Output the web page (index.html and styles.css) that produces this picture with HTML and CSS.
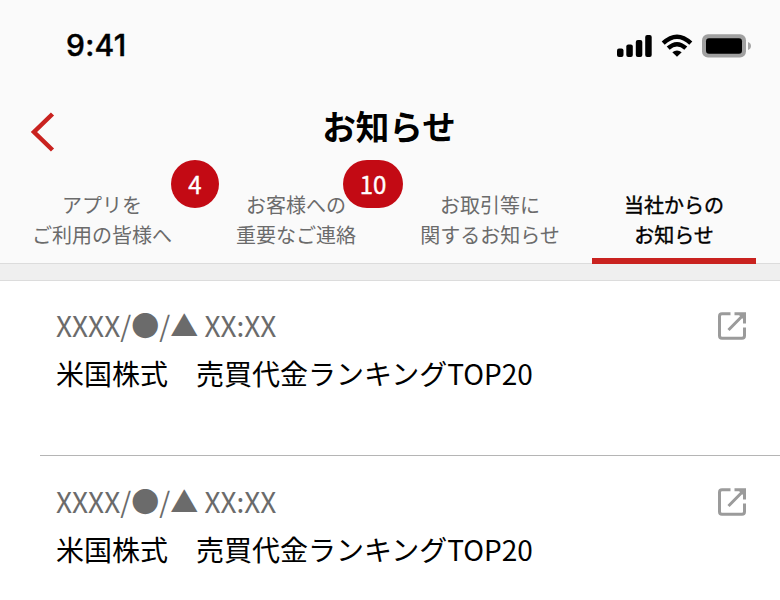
FILE: index.html
```html
<!DOCTYPE html>
<html lang="ja">
<head>
<meta charset="utf-8">
<title>お知らせ</title>
<link rel="stylesheet" href="styles.css">
</head>
<body>
<header class="top">
  <div class="status">
    <span class="clock">9:41</span>
    <div class="indicators">
      <svg class="signal" width="35" height="22" viewBox="0 0 35 22"><rect x="0" y="13.5" width="6.5" height="8.5" rx="2"/><rect x="9.3" y="9.5" width="6.5" height="12.5" rx="2"/><rect x="18.8" y="5" width="6.5" height="17" rx="2"/><rect x="28.2" y="0" width="6.5" height="22" rx="2"/></svg>
      <svg class="wifi" width="32" height="24" viewBox="0 0 32 24"><path d="M2.2 9.2Q16-3.7 29.8 9.2M7.2 14.2Q16 6.2 24.8 14.2" fill="none" stroke="#000" stroke-width="4.4"/><path d="M11.3 18.2Q16 14.6 20.7 18.2L16 22.8Z"/></svg>
      <svg class="battery" width="49" height="24" viewBox="0 0 49 24"><rect x="0" y="0.3" width="44" height="23.2" rx="6" fill="#a0a0a0"/><rect x="4" y="4.2" width="36" height="15.6" rx="3"/><path d="M46 8q3 1.2 3 4t-3 4z" fill="#a6a6a6"/></svg>
    </div>
  </div>
  <div class="titlebar">
    <svg class="back" width="26" height="40" viewBox="0 0 26 40"><path d="M22.5 2L4 20L22.5 38" fill="none" stroke="#c9221f" stroke-width="4.5"/></svg>
    <h1>お知らせ</h1>
  </div>
  <nav class="tabs">
    <a class="tab">アプリを<br>ご利用の皆様へ<span class="badge">4</span></a>
    <a class="tab">お客様への<br>重要なご連絡<span class="badge wide">10</span></a>
    <a class="tab">お取引等に<br>関するお知らせ</a>
    <a class="tab active">当社からの<br>お知らせ</a>
  </nav>
</header>
<div class="gap"></div>
<main>
  <article class="item">
    <div class="date">XXXX/●/▲ XX:XX</div>
    <div class="subject">米国株式　売買代金ランキングTOP20</div>
    <svg class="ext" width="28" height="28" viewBox="0 0 28 28"><path d="M12.5 1.7H4Q1.5 1.7 1.5 4.2V23.8Q1.5 26.3 4 26.3H24Q26.5 26.3 26.5 23.8V15.5M16.5 1.7H26.5V11.5M26.5 1.7L10.5 18"/><path class="tip" d="M20 2H27V9Z"/></svg>
  </article>
  <article class="item">
    <div class="date">XXXX/●/▲ XX:XX</div>
    <div class="subject">米国株式　売買代金ランキングTOP20</div>
    <svg class="ext" width="28" height="28" viewBox="0 0 28 28"><path d="M12.5 1.7H4Q1.5 1.7 1.5 4.2V23.8Q1.5 26.3 4 26.3H24Q26.5 26.3 26.5 23.8V15.5M16.5 1.7H26.5V11.5M26.5 1.7L10.5 18"/><path class="tip" d="M20 2H27V9Z"/></svg>
  </article>
</main>
</body>
</html>
```
FILE: styles.css
```css
* { box-sizing: border-box; }
body { margin: 0; width: 780px; height: 600px; background: #fff; color: #000; font-family: "Noto Sans CJK JP", sans-serif; }
.top { height: 263px; background: #fafafa; }
.status { height: 92px; display: flex; justify-content: space-between; padding: 0 29px 0 66px; align-items: center; }
.clock { font: 500 30px/36px Inter, sans-serif; letter-spacing: 0.3px; padding-bottom: 2px; -webkit-text-stroke: 0.4px #000; }
.indicators { display: flex; align-items: center; gap: 9px; }
.titlebar { height: 88px; position: relative; }
.back { position: absolute; left: 30px; top: 20px; }
h1 { margin: 0; text-align: center; font-size: 33.6px; line-height: 50px; padding: 9px 2px 0 0; font-weight: 700; }
.tabs { display: grid; grid-template-columns: 194px 194px 184px 164px; padding: 10px 0 0 20px; }
.tab { position: relative; width: 164px; height: 74px; font-size: 20px; line-height: 30px; text-align: center; color: #6b6b6b; }
.active { color: #000; -webkit-text-stroke: 0.4px #000; border-bottom: 6px solid #c9221f; }
.badge { position: absolute; left: 151px; top: -30px; width: 48px; height: 48px; border-radius: 24px; background: #c30a14; color: #fff; font-size: 24px; line-height: 47px; -webkit-text-stroke: 0.4px #fff; }
.wide { left: 129px; width: 60px; }
.gap { height: 18px; background: #efefef; border-top: 1px solid #dcdcdc; border-bottom: 1px solid #dcdcdc; }
main { height: 319px; overflow: hidden; }
.item { position: relative; height: 176px; padding: 23px 16px 0; margin-left: 40px; border-bottom: 1px solid #b5b5b5; }
.item:first-child { height: 175px; }
.item + .item { padding-top: 24px; }
.date { font-size: 28px; line-height: 42px; color: #6b6b6b; }
.subject { font-size: 28px; line-height: 42px; margin-top: 6px; }
.ext { position: absolute; left: 678px; top: 31px; fill: none; stroke: #9b9b9b; stroke-width: 3; }
.ext .tip { fill: #9b9b9b; stroke: none; }
.item + .item .ext { top: 32px; }
```
